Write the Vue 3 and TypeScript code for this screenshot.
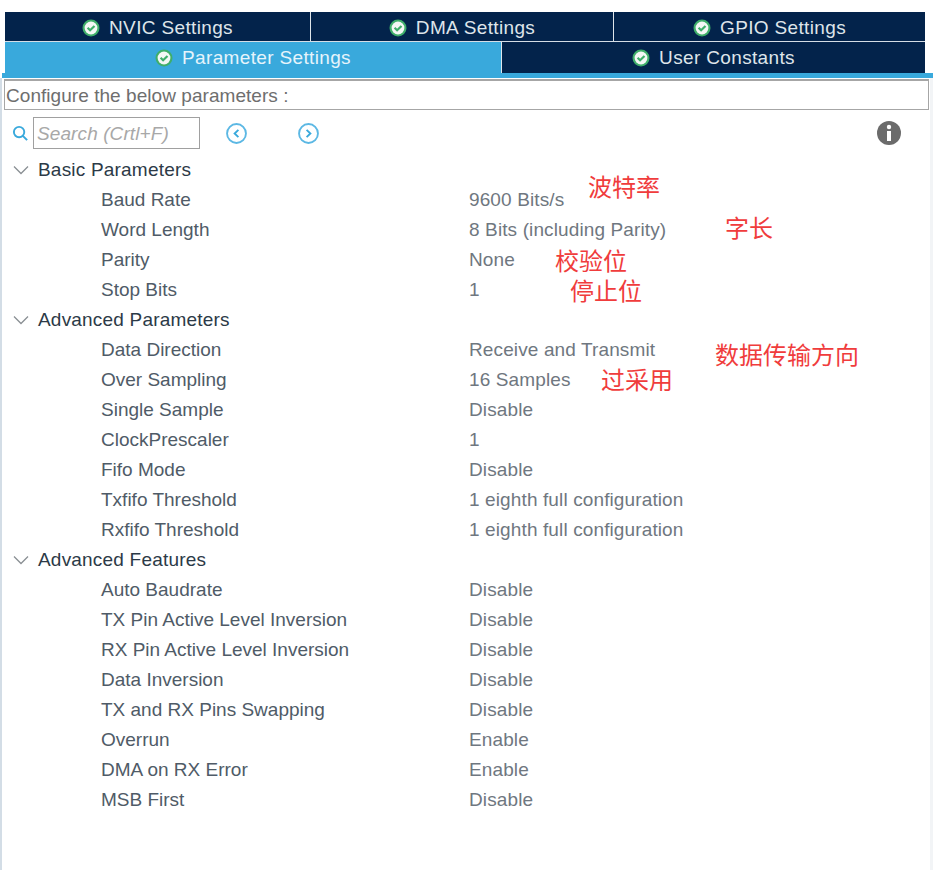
<script setup lang="ts">
interface Row { label: string; value?: string; group?: boolean }
const rows: Row[] = [
  { label: 'Basic Parameters', group: true },
  { label: 'Baud Rate', value: '9600 Bits/s' },
  { label: 'Word Length', value: '8 Bits (including Parity)' },
  { label: 'Parity', value: 'None' },
  { label: 'Stop Bits', value: '1' },
  { label: 'Advanced Parameters', group: true },
  { label: 'Data Direction', value: 'Receive and Transmit' },
  { label: 'Over Sampling', value: '16 Samples' },
  { label: 'Single Sample', value: 'Disable' },
  { label: 'ClockPrescaler', value: '1' },
  { label: 'Fifo Mode', value: 'Disable' },
  { label: 'Txfifo Threshold', value: '1 eighth full configuration' },
  { label: 'Rxfifo Threshold', value: '1 eighth full configuration' },
  { label: 'Advanced Features', group: true },
  { label: 'Auto Baudrate', value: 'Disable' },
  { label: 'TX Pin Active Level Inversion', value: 'Disable' },
  { label: 'RX Pin Active Level Inversion', value: 'Disable' },
  { label: 'Data Inversion', value: 'Disable' },
  { label: 'TX and RX Pins Swapping', value: 'Disable' },
  { label: 'Overrun', value: 'Enable' },
  { label: 'DMA on RX Error', value: 'Enable' },
  { label: 'MSB First', value: 'Disable' },
]
const notes = [
  { text: '波特率', x: 588, y: 173 },
  { text: '字长', x: 725, y: 214 },
  { text: '校验位', x: 555, y: 247 },
  { text: '停止位', x: 570, y: 277 },
  { text: '数据传输方向', x: 715, y: 341 },
  { text: '过采用', x: 601, y: 366 },
]
</script>

<template>
  <div class="page">
    <div class="tabs">
      <div class="tab-row top">
        <div v-for="t in ['NVIC Settings', 'DMA Settings', 'GPIO Settings']" :key="t" class="tab">
          <svg class="ok" viewBox="0 0 18 18"><circle cx="9" cy="9" r="8.5" fill="#3fae6a" /><circle cx="9" cy="9" r="6.4" fill="#f4f7f5" /><path d="M5.6 8.8 8.1 11.3 12.5 7" fill="none" stroke="#3fae6a" stroke-width="2.2" /></svg>
          <span>{{ t }}</span>
        </div>
      </div>
      <div class="tab-row bottom">
        <div class="tab active">
          <svg class="ok" viewBox="0 0 18 18"><circle cx="9" cy="9" r="8.5" fill="#3fae6a" /><circle cx="9" cy="9" r="6.4" fill="#f4f7f5" /><path d="M5.6 8.8 8.1 11.3 12.5 7" fill="none" stroke="#3fae6a" stroke-width="2.2" /></svg>
          <span>Parameter Settings</span>
        </div>
        <div class="tab user">
          <svg class="ok" viewBox="0 0 18 18"><circle cx="9" cy="9" r="8.5" fill="#3fae6a" /><circle cx="9" cy="9" r="6.4" fill="#f4f7f5" /><path d="M5.6 8.8 8.1 11.3 12.5 7" fill="none" stroke="#3fae6a" stroke-width="2.2" /></svg>
          <span>User Constants</span>
        </div>
      </div>
    </div>
    <div class="panel">
      <div class="configure">Configure the below parameters :</div>
      <div class="toolbar">
        <svg class="search-icon" viewBox="0 0 18 18"><circle cx="7.5" cy="7.5" r="5.5" fill="none" stroke="#39a9dc" stroke-width="2" /><path d="M11.5 11.5 16 16" stroke="#39a9dc" stroke-width="2.2" /></svg>
        <div class="search">Search (Crtl+F)</div>
        <svg class="nav first" viewBox="0 0 20 20"><circle cx="10" cy="10" r="9" fill="none" stroke="#5cb8e4" stroke-width="1.8" /><path d="M11.8 6.5 8.2 10l3.6 3.5" fill="none" stroke="#39a9dc" stroke-width="1.8" /></svg>
        <svg class="nav second" viewBox="0 0 20 20"><circle cx="10" cy="10" r="9" fill="none" stroke="#5cb8e4" stroke-width="1.8" /><path d="M8.2 6.5 11.8 10l-3.6 3.5" fill="none" stroke="#39a9dc" stroke-width="1.8" /></svg>
        <svg class="info" viewBox="0 0 24 24"><circle cx="12" cy="12" r="12" fill="#6b6b6b" /><circle cx="12" cy="6" r="2.2" fill="#fff" /><rect x="10" y="10" width="4" height="10" fill="#fff" /></svg>
      </div>
      <div class="tree">
        <div v-for="r in rows" :key="r.label" class="row" :class="{ group: r.group }">
          <template v-if="r.group">
            <svg class="chev" viewBox="0 0 16 10"><path d="M1 1.5 8 8.5l7-7" fill="none" stroke="#8a8f94" stroke-width="1.3" /></svg>
            <span class="group-label">{{ r.label }}</span>
          </template>
          <template v-else>
            <span class="label">{{ r.label }}</span>
            <span class="value">{{ r.value }}</span>
          </template>
        </div>
      </div>
    </div>
    <span v-for="n in notes" :key="n.text" class="note" :style="{ left: n.x + 'px', top: n.y + 'px' }">{{ n.text }}</span>
  </div>
</template>

<style scoped>
.page {
  position: relative;
  width: 933px;
  height: 870px;
  background: #fff;
  overflow: hidden;
  font-family: "Liberation Sans", Arial, sans-serif;
  font-size: 19px;
}
.tabs {
  padding: 12px 8px 0 5px;
  height: 73px;
  box-sizing: border-box;
}
.tab-row {
  display: flex;
  background: #03234b;
}
.top { height: 29px; border-bottom: 1px solid #d5dde6; }
.bottom { height: 31px; }
.tab {
  display: flex;
  align-items: center;
  justify-content: center;
  gap: 9px;
  color: #dfe5ea;
  letter-spacing: 0.35px;
  box-sizing: border-box;
}
.top .tab { padding-top: 2px; }
.top .tab:nth-child(1) { width: 305px; }
.top .tab:nth-child(2) { width: 303px; border-left: 1px solid #dfe5ea; }
.top .tab:nth-child(3) { flex: 1; border-left: 1px solid #dfe5ea; }
.active { flex: 0 0 496px; background: #39a9dc; color: #e6f4fb; }
.user { flex: 1; border-left: 1px solid #dfe5ea; }
.ok { width: 18px; height: 18px; flex: none; }
.panel {
  margin-left: 2px;
  border-top: 5px solid #39a9dc;
  min-height: 797px;
  box-sizing: border-box;
  padding-top: 1px;
  position: relative;
}
.panel::before {
  content: "";
  position: absolute;
  left: -2px;
  top: 0;
  bottom: 0;
  width: 2px;
  background: #d3dde6;
}
.panel::after {
  content: "";
  position: absolute;
  right: 0;
  top: 0;
  bottom: 0;
  width: 3px;
  background: #f2f4f6;
}
.configure {
  margin: 0 4px 0 2px;
  height: 31px;
  box-sizing: border-box;
  border: 1px solid #a6a6a6;
  border-top-width: 2px;
  padding: 2px 0 0 1px;
  color: #6e6e6e;
  letter-spacing: 0.05px;
  line-height: 25px;
}
.toolbar {
  display: flex;
  align-items: center;
  height: 36px;
  margin-top: 5px;
}
.search-icon { width: 17px; height: 17px; margin-left: 10px; margin-top: 1px; }
.search {
  width: 167px;
  height: 32px;
  box-sizing: border-box;
  border: 1px solid #a0a0a0;
  margin-left: 4px;
  padding-left: 3px;
  line-height: 32px;
  color: #a8a8a8;
  font-style: italic;
  letter-spacing: 0.1px;
}
.nav { width: 21px; height: 21px; margin-top: 1px; }
.first { margin-left: 26px; }
.second { margin-left: 51px; }
.info { width: 24px; height: 24px; margin-left: auto; margin-right: 32px; }
.tree { margin-top: 4px; }
.row { display: flex; align-items: center; height: 30px; }
.chev { width: 16px; height: 10px; margin-left: 11px; }
.group-label { margin-left: 9px; color: #2c3a47; letter-spacing: 0.2px; }
.label { margin-left: 99px; width: 368px; flex: none; color: #4f5b67; }
.value { color: #6f7780; letter-spacing: 0.12px; }
.note {
  position: absolute;
  font-family: "Noto Sans CJK SC", sans-serif;
  font-size: 24px;
  line-height: 26px;
  color: #f03c3c;
  white-space: nowrap;
}
</style>
